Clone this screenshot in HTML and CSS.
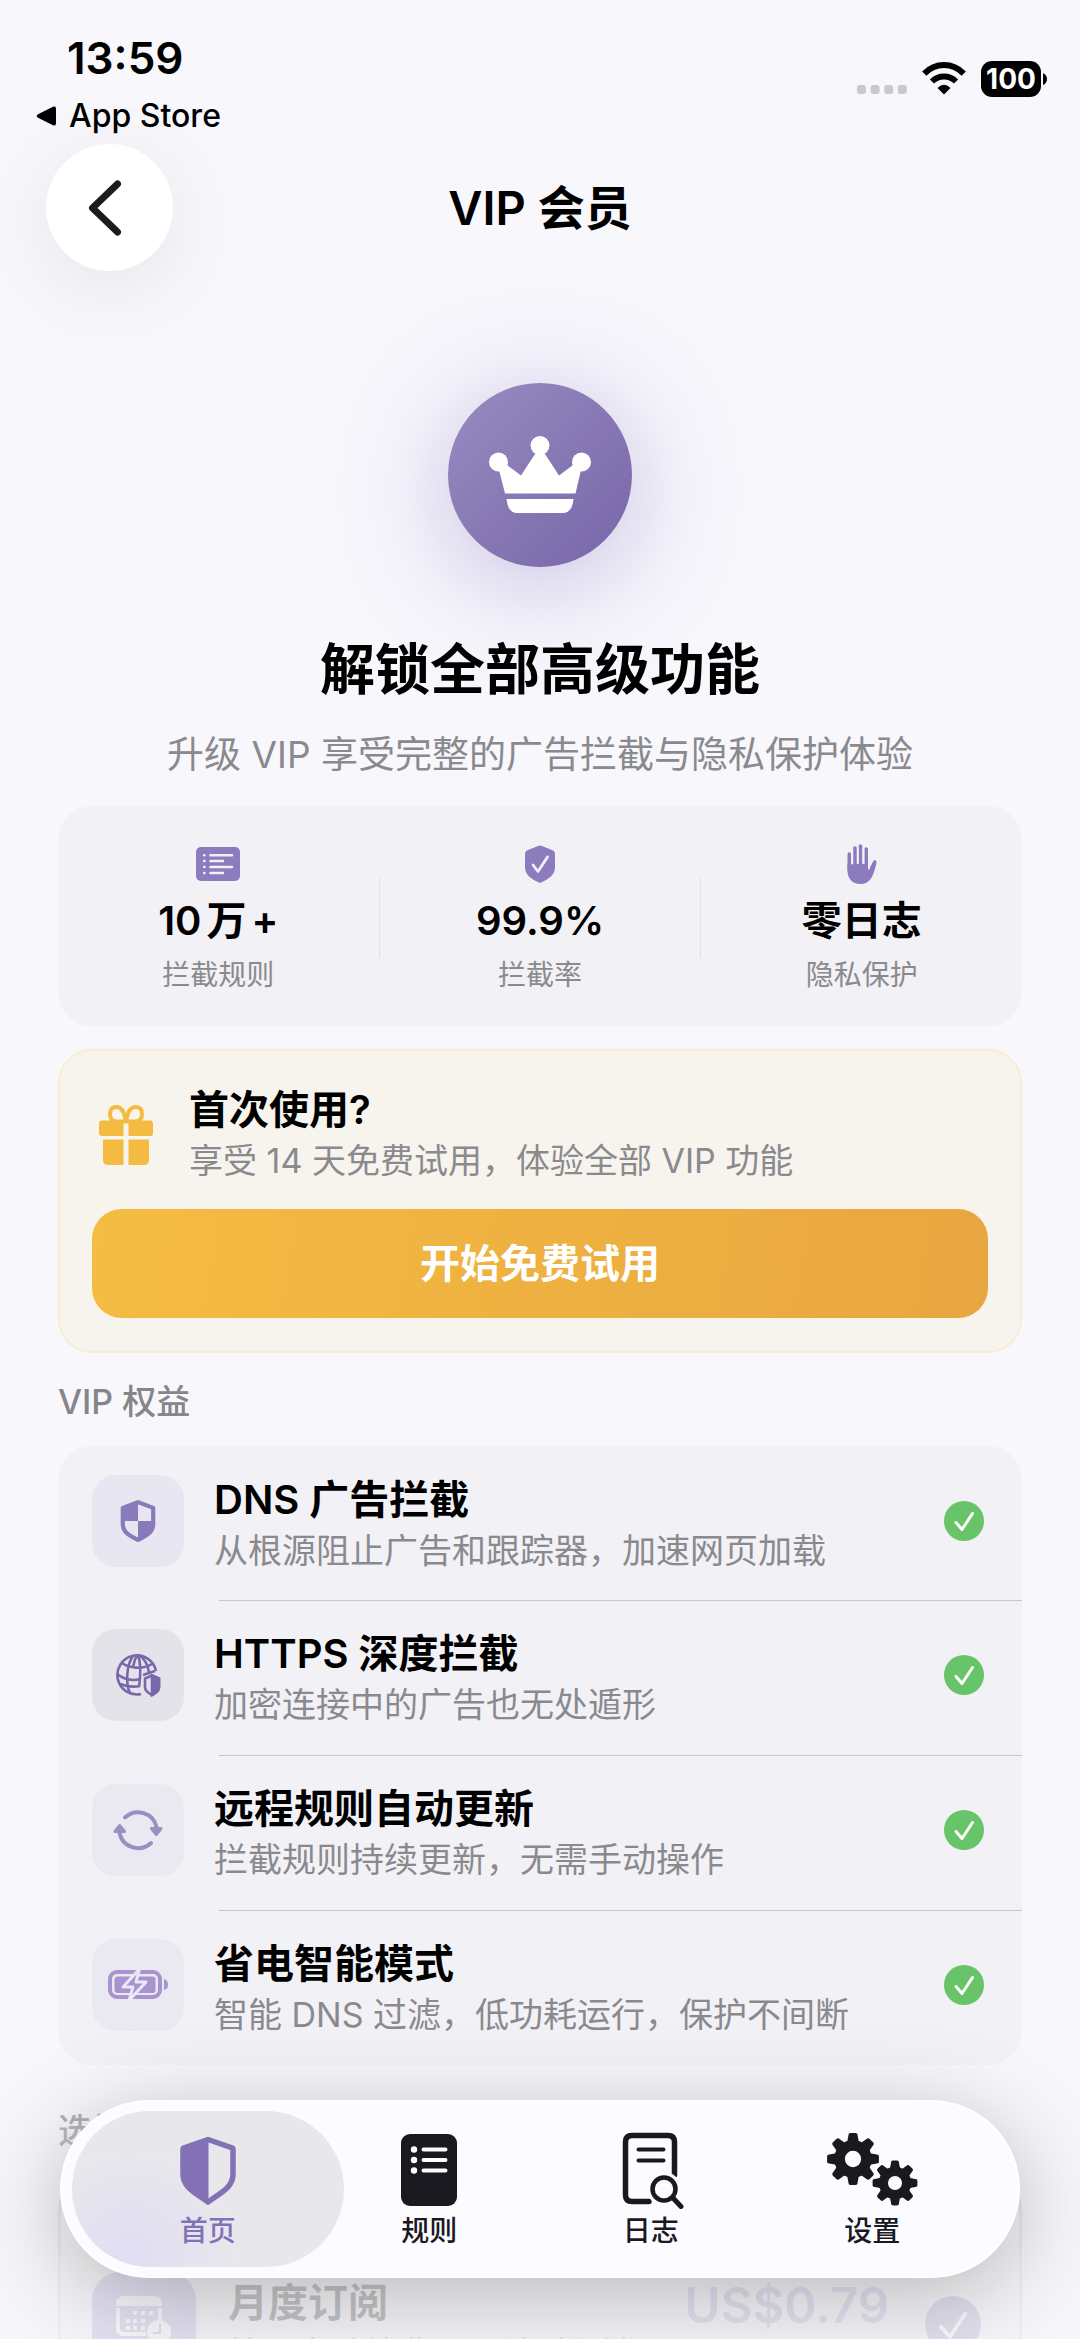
FILE: index.html
```html
<!DOCTYPE html>
<html lang="zh-CN">
<head>
<meta charset="utf-8">
<meta name="viewport" content="width=device-width, initial-scale=1">
<title>VIP 会员</title>
<link rel="stylesheet" href="styles.css">
</head>
<body>
<div class="app">
  <header class="status">
    <div class="status-left">
      <time class="clock">13:59</time>
      <a class="return-link" href="#">
        <svg width="21" height="20" viewBox="0 0 21 20" aria-hidden="true"><path d="M2 8.200 17.500 .6Q20 -.2 20 2.500V17.500Q20 20.200 17.500 19.400L2 11.800Q-.6 10 2 8.200Z"/></svg>
        App Store
      </a>
    </div>
    <div class="status-right">
      <svg class="dots" width="50" height="12" viewBox="0 0 50 12" fill="#c9c8cd" aria-hidden="true"><rect width="9" height="9" rx="3"/><rect x="13.600" width="9" height="9" rx="3"/><rect x="27.200" width="9" height="9" rx="3"/><rect x="40.800" width="9" height="9" rx="3"/></svg>
      <svg width="44" height="36" viewBox="0 0 44 36" aria-hidden="true"><path d="M22 33.500 15.500 27Q22 20.500 28.500 27Z"/><g fill="none" stroke="#000" stroke-width="6"><path d="M2.300 12.600Q10.500 4 22 4T41.700 12.600"/><path d="M10 20.500Q15 15.500 22 15.500T34 20.500"/></g></svg>
      <div class="battery"><span class="level">100</span><svg width="4" height="12" viewBox="0 0 4 12" aria-hidden="true"><path d="M0 0Q4 2 4 6T0 12Z"/></svg></div>
    </div>
  </header>

  <nav class="navbar">
    <button class="back" type="button" aria-label="返回">
      <svg width="34" height="56" viewBox="0 0 34 56" fill="none" stroke="#1c1c1e" stroke-width="7" stroke-linecap="round" stroke-linejoin="round" aria-hidden="true"><path d="M29.500 4 4.500 28 29.500 52"/></svg>
    </button>
    <h1 class="nav-title">VIP 会员</h1>
  </nav>

  <main class="content">
    <section class="hero">
      <div class="crown">
        <svg width="102" height="78" viewBox="0 0 102 78" fill="#fff" aria-hidden="true"><circle cx="51" cy="9.500" r="9.500"/><circle cx="9.500" cy="26" r="9.500"/><circle cx="92.500" cy="26" r="9.500"/><path d="M10 34 18 29 32 39.500 46 18H56L70 39.500 84 29 92 34 86.500 57.500H16Z"/><path d="M17.500 63H84.500Q83 77 74 77H28Q19 77 17.500 63Z"/></svg>
      </div>
      <h2 class="hero-title">解锁全部高级功能</h2>
      <p class="hero-sub">升级 VIP 享受完整的广告拦截与隐私保护体验</p>
    </section>

    <section class="stats">
      <div class="stat">
        <span class="stat-icon"><svg width="44" height="34" viewBox="0 0 44 34" aria-hidden="true"><rect width="44" height="34" rx="5" fill="#8c7cbe"/><g stroke="#f1f0f6" stroke-width="2.600" stroke-linecap="round"><path d="M8.200 8.200h.2M8.200 14h.2M8.200 20h.2M8.200 26h.2M14.500 8.200H36M14.500 14H27M14.500 20H36M14.500 26H27"/></g></svg></span>
        <strong class="stat-value">10<span class="unit">万</span>+</strong>
        <span class="stat-label">拦截规则</span>
      </div>
      <span class="divider"></span>
      <div class="stat">
        <span class="stat-icon"><svg width="30" height="38" viewBox="0 0 30 38" aria-hidden="true"><path d="M13 1Q15 0 17 1L27 5Q30 6 30 9V22C30 30 24 34 15 38C6 34 0 30 0 22V9Q0 6 3 5Z" fill="#8c7cbe"/><path d="M8 20 13 26.500 22.500 12" fill="none" stroke="#f1f0f6" stroke-width="2.800" stroke-linecap="round" stroke-linejoin="round"/></svg></span>
        <strong class="stat-value">99.9%</strong>
        <span class="stat-label">拦截率</span>
      </div>
      <span class="divider"></span>
      <div class="stat">
        <span class="stat-icon"><svg width="30" height="40" viewBox="0 0 30 40" aria-hidden="true"><g fill="none" stroke="#8c7cbe" stroke-width="3.600" stroke-linecap="round"><path d="M2.300 10V26M8 4V24M13.500 2V24M19.200 5V26M27.800 18 22 29"/></g><path d="M.5 20H21V25L24 23 29.500 19Q27 30 24 34.500Q20 40 13.500 40Q2 40 .5 28Z" fill="#8c7cbe"/><path d="M5.200 5V19.500M10.800 5V18M16.400 5V18.500M22 15V24.500" stroke="#f2f1f6" stroke-width="1.800" stroke-linecap="round"/></svg></span>
        <strong class="stat-value">零日志</strong>
        <span class="stat-label">隐私保护</span>
      </div>
    </section>

    <section class="trial">
      <div class="trial-head">
        <span class="trial-icon"><svg width="54" height="60" viewBox="0 0 54 60" fill="#f4bb43" aria-hidden="true"><path d="M3 15.500H24.500V31H3Q0 31 0 28V18.500Q0 15.500 3 15.500ZM29.500 15.500H51Q54 15.500 54 18.500V28Q54 31 51 31H29.500ZM4 34.500H24.500V60H9Q4 60 4 55ZM29.500 34.500H50V55Q50 60 45 60H29.500Z"/><path d="M27 17C25 5 22 2 17.500 2Q11 2 11 9T17.500 16.500H36.500Q43 16 43 9T36.500 2C32 2 29 5 27 17Z" fill="none" stroke="#f4bb43" stroke-width="4"/></svg></span>
        <div>
          <h3 class="item-title">首次使用?</h3>
          <p class="item-sub">享受 14 天免费试用，体验全部 VIP 功能</p>
        </div>
      </div>
      <button class="trial-button" type="button">开始免费试用</button>
    </section>

    <h2 class="section-label">VIP 权益</h2>
    <ul class="features">
      <li class="feature">
        <span class="tile tile-violet"><svg width="36" height="42" viewBox="0 0 34 40" aria-hidden="true"><path d="M17 2 31.500 7.500V23C31.500 31 24 34.500 17 38C10 34.500 2.500 31 2.500 23V7.500Z" fill="#e7e5f1" stroke="#897abb" stroke-width="4" stroke-linejoin="round"/><path d="M17 2V20H2.500V7.500ZM17 20H31.500V23C31.500 31 24 34.500 17 38Z" fill="#897abb"/></svg></span>
        <div class="feature-text"><h3 class="item-title">DNS 广告拦截</h3><p class="item-sub">从根源阻止广告和跟踪器，加速网页加载</p></div>
        <svg class="check" width="40" height="40" viewBox="0 0 40 40" aria-hidden="true"><circle cx="20" cy="20" r="20"/><path d="M12 21.500 18 28.500 28.500 12.500"/></svg>
      </li>
      <li class="feature">
        <span class="tile tile-gray"><svg width="46" height="44" viewBox="0 0 46 44" fill="none" stroke="#7867ab" stroke-width="2.600" aria-hidden="true"><path d="M41 18A19.500 19.500 0 1 0 26 41"/><path d="M18 3C12 11 10 30 15 40M22 2C20 6 19 9 18 14M24 2C30 6 33 12 34 20M23 2C26 10 26 20 24 34M7 10C14 15 27 17 37 11M2 21C10 27 18 28 25 26M28 22 40 18M5 31C12 34 19 34 25 33"/><path d="M37 22.500 44 25.500V34C44 38 41 40 37 42C33 40 30 38 30 34V25.500Z" stroke-linejoin="round"/><path d="M37 22.500 44 25.500V34C44 38 41 40 37 42Z" fill="#7867ab"/></svg></span>
        <div class="feature-text"><h3 class="item-title">HTTPS 深度拦截</h3><p class="item-sub">加密连接中的广告也无处遁形</p></div>
        <svg class="check" width="40" height="40" viewBox="0 0 40 40" aria-hidden="true"><circle cx="20" cy="20" r="20"/><path d="M12 21.500 18 28.500 28.500 12.500"/></svg>
      </li>
      <li class="feature">
        <span class="tile tile-pale"><svg width="50" height="42" viewBox="0 0 50 42" fill="none" stroke="#9a8fc2" stroke-width="4" stroke-linecap="round" aria-hidden="true"><path d="M12 8.500A19 19 0 0 1 43.500 18M38 34A19 19 0 0 1 6.500 24"/><path d="M38.500 19.500H48L43.300 25.500ZM2 22.500H11.500L6.700 16.500Z" fill="#9a8fc2" stroke-width="3" stroke-linejoin="round"/></svg></span>
        <div class="feature-text"><h3 class="item-title">远程规则自动更新</h3><p class="item-sub">拦截规则持续更新，无需手动操作</p></div>
        <svg class="check" width="40" height="40" viewBox="0 0 40 40" aria-hidden="true"><circle cx="20" cy="20" r="20"/><path d="M12 21.500 18 28.500 28.500 12.500"/></svg>
      </li>
      <li class="feature">
        <span class="tile tile-pale"><svg width="62" height="32" viewBox="0 0 62 32" aria-hidden="true"><rect x="3" y="3" width="50" height="25" rx="7" fill="none" stroke="#a793cf" stroke-width="4"/><rect x="7.500" y="7.500" width="41" height="16.500" rx="3" fill="#a793cf"/><path d="M57 10Q61 11 61 15.500T57 21Z" fill="#a793cf"/><path d="M32.500 0 16 18H26L22 31.500 39 13H29Z" fill="#a793cf" stroke="#eae8f2" stroke-width="3" stroke-linejoin="round"/></svg></span>
        <div class="feature-text"><h3 class="item-title">省电智能模式</h3><p class="item-sub">智能 DNS 过滤，低功耗运行，保护不间断</p></div>
        <svg class="check" width="40" height="40" viewBox="0 0 40 40" aria-hidden="true"><circle cx="20" cy="20" r="20"/><path d="M12 21.500 18 28.500 28.500 12.500"/></svg>
      </li>
    </ul>

    <h2 class="section-label plans-label">选择套餐</h2>
    <section class="plan">
      <span class="plan-tile"><svg width="56" height="56" viewBox="0 0 56 56" fill="#fff" aria-hidden="true"><path d="M8 0H38Q46 0 46 8V10H0V8Q0 0 8 0Z"/><path d="M2 12V32Q2 38 8 38H30M44 12V24" fill="none" stroke="#fff" stroke-width="4"/><g><rect x="17" y="15" width="4" height="4"/><rect x="25" y="15" width="4" height="4"/><rect x="33" y="15" width="4" height="4"/><rect x="10" y="23" width="4" height="4"/><rect x="17" y="23" width="4" height="4"/><rect x="25" y="23" width="4" height="4"/><rect x="10" y="30" width="4" height="4"/><rect x="17" y="30" width="4" height="4"/><rect x="25" y="30" width="4" height="4"/></g><circle cx="43" cy="36" r="12"/><path d="M44 28V37H37" fill="none" stroke="#8f80d0" stroke-width="2"/></svg></span>
      <div class="feature-text"><h3 class="item-title">月度订阅</h3><p class="item-sub">按月自动续费，可随时取消</p></div>
      <strong class="price">US$0.79</strong>
      <svg class="plan-check" width="56" height="56" viewBox="0 0 56 56" aria-hidden="true"><circle cx="28" cy="28" r="28"/><path d="M16 31 25 41 40 18"/></svg>
    </section>
  </main>

  <div class="fade"></div>
  <nav class="tabbar">
    <a class="tab active" href="#">
      <svg width="78" height="78" viewBox="0 0 78 78" aria-hidden="true"><path d="M39 8.500 63.500 17Q64 17 64 19V43C64 56 53 61 39 71C25 61 14 56 14 43V19Q14 17 14.500 17Z" fill="none" stroke="#8271b4" stroke-width="5.500" stroke-linejoin="round"/><path d="M39.500 8 14 17V43C14 56 25 61 39.500 71Z" fill="#8271b4"/></svg>
      <span>首页</span>
    </a>
    <a class="tab" href="#">
      <svg width="78" height="78" viewBox="0 0 78 78" aria-hidden="true"><rect x="11" y="3" width="56" height="72" rx="9" fill="#1a191f"/><g stroke="#fff" stroke-width="4" stroke-linecap="round"><path d="M33.500 18.500H55.500M33.500 29H55.500M33.500 39.500H55.500"/></g><g fill="#fff"><circle cx="24" cy="18.500" r="3.200"/><circle cx="24" cy="29" r="3.200"/><circle cx="24" cy="39.500" r="3.200"/></g></svg>
      <span>规则</span>
    </a>
    <a class="tab" href="#">
      <svg width="78" height="78" viewBox="0 0 78 78" fill="none" stroke="#1a191f" stroke-linecap="round" aria-hidden="true"><path d="M37 70.500H20Q13.500 70.500 13.500 64V11Q13.500 4.500 20 4.500H56Q62.500 4.500 62.500 11V44" stroke-width="5.500"/><path d="M26.500 18.500H51.500M26.500 29.500H51.500" stroke-width="4"/><circle cx="52" cy="58" r="17" fill="#fcfbff" stroke="none"/><circle cx="52" cy="58" r="11.500" stroke-width="4.500"/><path d="M61 67 69 75.500" stroke-width="5"/></svg>
      <span>日志</span>
    </a>
    <a class="tab" href="#">
      <svg width="96" height="78" viewBox="0 0 96 78" fill="#1a191f" aria-hidden="true"><defs><path id="tooth" d="M-6.500 -15 -4.500 -26Q-4 -27 -2.500 -27H2.500Q4 -27 4.500 -26L6.500 -15Z"/><g id="gear"><circle r="14" fill="none" stroke="#1a191f" stroke-width="11"/><use href="#tooth"/><use href="#tooth" transform="rotate(45)"/><use href="#tooth" transform="rotate(90)"/><use href="#tooth" transform="rotate(135)"/><use href="#tooth" transform="rotate(180)"/><use href="#tooth" transform="rotate(225)"/><use href="#tooth" transform="rotate(270)"/><use href="#tooth" transform="rotate(315)"/></g></defs><use href="#gear" transform="translate(29 28) scale(.96)"/><use href="#gear" transform="translate(71 52) scale(.83)"/></svg>
      <span>设置</span>
    </a>
  </nav>
</div>
</body>
</html>
```

FILE: styles.css
```css
* { box-sizing: border-box; }

body {
  margin: 0;
  background: #f8f7fc;
  color: #000;
  font-family: Inter, "Noto Sans CJK SC", sans-serif;
}

h1, h2, h3, p, ul { margin: 0; padding: 0; }
ul { list-style: none; }
a { color: inherit; text-decoration: none; }
svg { display: block; flex: none; }
button { font: inherit; border: 0; cursor: pointer; }

.app {
  position: relative;
  height: 100vh;
  overflow: hidden;
}

/* Status bar */
.status {
  display: flex;
  justify-content: space-between;
  align-items: flex-start;
  padding: 32px 33px 8px 36px;
}
.clock {
  display: block;
  padding-left: 31px;
  font-size: 44px;
  line-height: 52px;
  font-weight: 600;
}
.return-link {
  display: flex;
  align-items: center;
  gap: 12px;
  margin-top: 12px;
  font-size: 32px;
  line-height: 40px;
  font-weight: 500;
}
.status-right {
  display: flex;
  align-items: flex-end;
  gap: 15px;
  padding-top: 29px;
}
.battery { display: flex; align-items: center; gap: 2px; }
.level {
  width: 60px;
  border-radius: 11px;
  background: #000;
  color: #fff;
  font-size: 28px;
  line-height: 36px;
  font-weight: 700;
  text-align: center;
}

/* Navigation bar */
.navbar {
  display: grid;
  grid-template-columns: 127px 1fr 127px;
  align-items: center;
  padding: 0 46px;
}
.back {
  display: grid;
  place-items: center;
  width: 127px;
  height: 127px;
  padding: 0 10px 0 0;
  border-radius: 50%;
  background: #fff;
  box-shadow: 0 16px 80px rgba(0, 0, 0, .08);
}
.nav-title {
  font-size: 47px;
  line-height: 66px;
  font-weight: 600;
  text-align: center;
}

.content { padding: 0 58px; }

/* Hero */
.hero {
  display: flex;
  flex-direction: column;
  align-items: center;
  padding: 112px 0 27px;
  text-align: center;
}
.crown {
  display: grid;
  place-items: center;
  width: 184px;
  height: 184px;
  margin-bottom: 66px;
  border-radius: 50%;
  background: linear-gradient(135deg, #988bc0, #7766a9);
  box-shadow: 0 16px 110px rgba(110, 95, 185, .38);
}
.hero-title {
  font-size: 55px;
  line-height: 72px;
  font-weight: 700;
}
.hero-sub {
  margin-top: 26px;
  color: #8a8a8e;
  font-size: 37px;
  line-height: 48px;
}

/* Stats */
.stats {
  display: grid;
  grid-template-columns: 1fr 1px 1fr 1px 1fr;
  align-items: center;
  padding: 36px 0 33px;
  border-radius: 34px;
  background: #f2f1f6;
}
.stat {
  display: flex;
  flex-direction: column;
  align-items: center;
}
.stat-icon { display: grid; place-items: center; height: 44px; }
.stat-value {
  margin: 11px 0 12px;
  font-size: 40px;
  line-height: 48px;
  font-weight: 600;
}
.unit { margin: 0 5px; }
.stat-label { color: #8a8a8e; font-size: 28px; line-height: 36px; }
.divider { height: 80px; background: #e2e1e8; }

/* Free trial */
.trial {
  margin-top: 23px;
  padding: 33px 32px;
  border: 2px solid #f6edd2;
  border-radius: 34px;
  background: #f7f4ed;
}
.trial-head { display: flex; align-items: center; gap: 29px; }
.trial-icon { display: grid; place-items: center; width: 68px; }
.trial-button {
  display: block;
  width: 100%;
  margin-top: 23px;
  border-radius: 30px;
  padding: 0;
  background: linear-gradient(100deg, #f5bc42, #e8a640);
  color: #fff;
  font-size: 40px;
  line-height: 109px;
  font-weight: 600;
}

.item-title { font-size: 40px; line-height: 51px; font-weight: 600; }
.item-sub { color: #8a8a8e; font-size: 34px; line-height: 51px; }

.section-label {
  margin: 27px 0 22px;
  color: #85858a;
  font-size: 34px;
  line-height: 44px;
  font-weight: 500;
}

/* Feature list */
.features { border-radius: 34px; background: #f2f1f6; }
.feature {
  display: grid;
  grid-template-columns: 92px 1fr 40px;
  align-items: center;
  gap: 0 30px;
  padding: 20px 38px 24px 34px;
}
.feature + .feature {
  background: linear-gradient(#c8c7cc, #c8c7cc) 161px 0 / 100% 1px no-repeat;
  padding-bottom: 25px;
}
.feature-text { padding-top: 8px; }
.tile {
  display: grid;
  place-items: center;
  height: 92px;
  border-radius: 24px;
}
.tile-violet { background: #e8e6f1; }
.tile-gray { background: #e4e3ea; }
.tile-pale { background: #eae9f1; }
.check { fill: #68c468; }
.check path, .plan-check path {
  fill: none;
  stroke: #fff;
  stroke-width: 3;
  stroke-linecap: round;
  stroke-linejoin: round;
}

/* Plans */
.plans-label { margin-top: 44px; }
.plan {
  display: grid;
  grid-template-columns: 104px 1fr auto 56px;
  align-items: center;
  gap: 32px;
  padding: 91px 38px 40px 31px;
  border: 3px solid #d2cfe0;
  border-radius: 34px;
  background: #f2f1f6;
}
.plan-tile {
  display: grid;
  place-items: center;
  height: 104px;
  border-radius: 28px;
  background: #9a90d0;
}
.price {
  align-self: start;
  margin-right: 4px;
  color: #9a90c8;
  font-size: 49px;
  line-height: 74px;
  font-weight: 600;
}
.plan-check { fill: #8f80c0; }
.plan-check path { stroke-width: 4; }

/* Content dissolves towards the bottom edge */
.fade {
  position: absolute;
  inset: auto 0 0;
  height: 300px;
  background: linear-gradient(rgba(246, 246, 250, 0), rgba(246, 246, 250, .45) 30%, rgba(246, 246, 250, .8) 80%);
}

/* Tab bar */
.tabbar {
  position: absolute;
  inset: auto 60px 61px;
  display: grid;
  grid-template-columns: repeat(4, 1fr);
  padding: 9px 35px;
  border: 2px solid #fff;
  border-radius: 89px;
  background: #fcfbff;
  box-shadow: 0 18px 90px rgba(0, 0, 0, .25);
  color: #1a191f;
}
.tab {
  display: flex;
  flex-direction: column;
  align-items: center;
  gap: 2px;
  padding: 20px 0 16px;
  border-radius: 78px;
  font-size: 28px;
  line-height: 40px;
  font-weight: 500;
}
.active {
  margin: 0 -25px;
  background: radial-gradient(circle at 22% 92%, #e1ddf3, rgba(225, 221, 243, 0) 42%) #e8e8ec;
  color: #8271b4;
}
```
